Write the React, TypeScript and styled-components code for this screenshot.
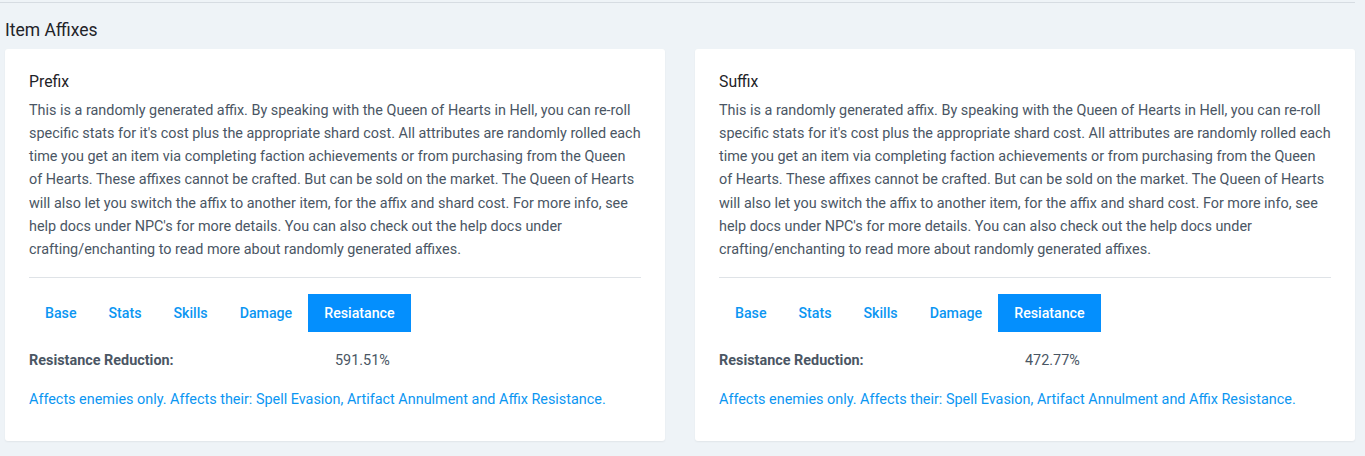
import React from "react";
import styled, { createGlobalStyle } from "styled-components";

const Global = createGlobalStyle`
  html, body { margin: 0; padding: 0; background: #eef3f7; }
  body { font-family: Roboto, "Noto Sans", "Liberation Sans", sans-serif; }
  * { box-sizing: border-box; }
`;

const Page = styled.div`
  width: 1365px;
  height: 456px;
  padding: 2px 10px 0 5px;
  overflow: hidden;
`;

const Rule = styled.div`
  height: 1px;
  background: #d6dce2;
  margin-left: -5px;
`;

const Title = styled.h2`
  margin: 17px 0 9px;
  line-height: 20px;
  font-size: 17.5px;
  font-weight: 400;
  color: #1f2429;
`;

const Grid = styled.div`
  display: grid;
  grid-template-columns: 660px 660px;
  gap: 30px;
`;

const Card = styled.section`
  background: #fff;
  border-radius: 3px;
  box-shadow: 0 1px 2px rgba(0, 0, 0, 0.06);
  padding: 23px 24px 31px;
`;

const CardTitle = styled.h3`
  margin: 0 0 7px;
  font-size: 15.8px;
  font-weight: 400;
  line-height: 20px;
  color: #1f2429;
`;

const Para = styled.p`
  margin: 0;
  font-size: 14.4px;
  line-height: 23.15px;
  color: #4a5664;
`;

const Divider = styled.hr`
  border: 0;
  border-top: 1px solid #dfe3e7;
  margin: 16px 0 16px;
`;

const Tabs = styled.div`
  display: flex;
  margin-bottom: 19px;
`;

const Tab = styled.button<{ $active?: boolean }>`
  border: 0;
  font-family: inherit;
  font-size: 14.2px;
  padding: 0 16px;
  height: 38px;
  cursor: pointer;
  background: ${(p) => (p.$active ? "#048ffd" : "transparent")};
  color: ${(p) => (p.$active ? "#ffffff" : "#0b96f2")};
  font-weight: 500;
`;

const StatRow = styled.div`
  display: grid;
  grid-template-columns: 1fr 1fr;
  font-size: 14.4px;
  line-height: 20px;
  color: #4a5664;
  margin-bottom: 19px;
`;

const StatLabel = styled.div`
  font-weight: 700;
`;

const Note = styled.div`
  font-size: 14.4px;
  line-height: 20px;
  color: #0b96f2;
`;

const DESC =
  "This is a randomly generated affix. By speaking with the Queen of Hearts in Hell, you can re-roll specific stats for it's cost plus the appropriate shard cost. All attributes are randomly rolled each time you get an item via completing faction achievements or from purchasing from the Queen of Hearts. These affixes cannot be crafted. But can be sold on the market. The Queen of Hearts will also let you switch the affix to another item, for the affix and shard cost. For more info, see help docs under NPC's for more details. You can also check out the help docs under crafting/enchanting to read more about randomly generated affixes.";

const TABS = ["Base", "Stats", "Skills", "Damage", "Resiatance"];

function AffixCard({ title, value }: { title: string; value: string }) {
  return (
    <Card>
      <CardTitle>{title}</CardTitle>
      <Para>{DESC}</Para>
      <Divider />
      <Tabs>
        {TABS.map((t) => (
          <Tab key={t} $active={t === "Resiatance"}>
            {t}
          </Tab>
        ))}
      </Tabs>
      <StatRow>
        <StatLabel>Resistance Reduction:</StatLabel>
        <div>{value}</div>
      </StatRow>
      <Note>
        Affects enemies only. Affects their: Spell Evasion, Artifact Annulment and Affix Resistance.
      </Note>
    </Card>
  );
}

export default function App() {
  return (
    <>
      <Global />
      <Page>
        <Rule />
        <Title>Item Affixes</Title>
        <Grid>
          <AffixCard title="Prefix" value="591.51%" />
          <AffixCard title="Suffix" value="472.77%" />
        </Grid>
      </Page>
    </>
  );
}
